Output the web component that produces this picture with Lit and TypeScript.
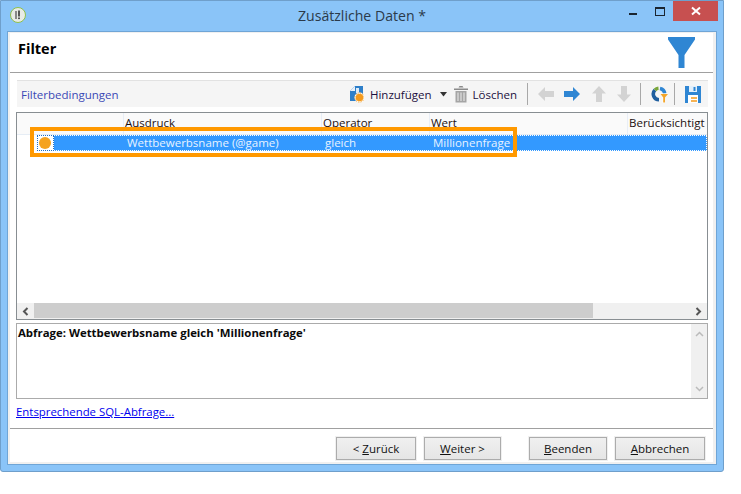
import { LitElement, html, css } from "lit";
import { customElement } from "lit/decorators.js";

const arrow = (d: string, c: string, cls: string) => html`<svg class="ic ${cls}" width="16" height="16" viewBox="0 0 16 16"><path d=${d} fill=${c}></path></svg>`;

@customElement("app-root")
export class AppRoot extends LitElement {
  static styles = css`
    :host { display: block; width: 741px; height: 494px; background: #fff; font-family: "Open Sans", "Noto Sans", sans-serif; font-size: 11.5px; color: #000; overflow: hidden; }
    * { box-sizing: border-box; }
    .win { width: 724px; height: 472px; background: #8ac4f8; border: 1px solid #6f9fcb; padding: 0 6px 6px 6px; display: flex; flex-direction: column; border-radius: 0 0 3px 3px; }
    .title { height: 30px; flex: none; position: relative; }
    .appicon { position: absolute; left: 3px; top: 6px; }
    .ttext { position: absolute; left: 0; right: 0; top: 5px; text-align: center; font-size: 14.1px; color: #2b3a4a; line-height: 20px; }
    .min { position: absolute; right: 80px; top: 12px; width: 8px; height: 2px; background: #1a2530; }
    .max { position: absolute; right: 52px; top: 6px; width: 10px; height: 9px; border: 1px solid #1a2530; border-top-width: 2px; }
    .close { position: absolute; right: -1px; top: 0; width: 45px; height: 20px; background: #c75050; display: flex; align-items: center; justify-content: center; }
    .panel { flex: 1; background: #f0f0f0; border: 1px solid #6fa5d6; padding: 1px 3px 2px 2px; display: flex; }
    .inner { flex: 1; background: #fff; display: flex; flex-direction: column; min-width: 0; }
    .head { height: 40px; flex: none; border-bottom: 1px solid #a0a0a0; position: relative; }
    .head h1 { margin: 0; font-size: 14.5px; font-weight: 700; padding: 6px 0 0 8px; line-height: 20px; }
    .funnel { position: absolute; right: 18px; top: 4px; }
    .body { flex: 1; display: flex; flex-direction: column; padding: 7px 5px 0 6px; }
    .tb { height: 27px; flex: none; background: #f5f5f5; border-top: 1px solid #e2e2e2; display: flex; align-items: center; margin-left: 1px; padding: 0 7px 0 4px; }
    .tb .name { color: #3b49b5; flex: 1; }
    .tb .lbl { color: #1c1040; font-size: 11.5px; }
    .sep { width: 1px; height: 22px; background: #a8a8a8; flex: none; }
    .ic { flex: none; display: block; }
    .m6 { margin-left: 6px; } .m7 { margin-left: 7px; } .m5 { margin-left: 5px; } .m8 { margin-left: 8px; } .m10 { margin-left: 10px; } .m11 { margin-left: 11px; } .m9 { margin-left: 9px; }
    .list { margin-top: 5px; height: 208px; flex: none; border: 1px solid #888e92; position: relative; display: flex; flex-direction: column; }
    .lh { height: 22px; flex: none; background: #fafafa; display: grid; grid-template-columns: 107px 198px 108px 198px 1fr; border-bottom: 1px solid #e6edf5; color: #1c1010; line-height: 19px; }
    .lh div { border-right: 1px solid #e8eef6; padding-left: 1px; white-space: nowrap; }
    .lh div:last-child { border: 0; }
    .sel { height: 16px; flex: none; margin-left: 20px; background: #3399ff; border: 1px dotted #fff; display: grid; grid-template-columns: 88px 198px 108px 1fr; color: #e8f3ff; line-height: 14px; position: relative; }
    .c0 { background: #fff; width: 17px; display: flex; align-items: center; padding-left: 1px; border: 1px dotted #1d70c8; height: 16px; position: absolute; left: -1px; top: -1px; }
    .dot { width: 12px; height: 12px; background: #f5a31f; border-radius: 50%; display: block; }
    .sel span { padding-left: 1px; }
    .fill { flex: 1; background: #fff; }
    .hs { height: 16px; flex: none; background: #f0f0f0; display: flex; align-items: center; }
    .hs .b { width: 17px; height: 16px; display: flex; align-items: center; justify-content: center; flex: none; }
    .hs .t { width: 559px; height: 15px; align-self: flex-start; background: #cdcdcd; flex: none; }
    .hs .r { margin-left: auto; }
    .hl { position: absolute; left: 13px; top: 14px; width: 487px; height: 30px; border: 4px solid #ff9900; pointer-events: none; }
    .area { margin-top: 3px; height: 76px; flex: none; border: 1px solid #ababab; display: flex; }
    .area .txt { flex: 1; font-weight: 700; padding: 0 0 0 1px; line-height: 17px; color: #0a0a0a; font-size: 11.4px; }
    .area .vs { width: 16px; background: #f0f0f0; display: flex; flex-direction: column; justify-content: space-between; align-items: center; padding: 7px 0 6px; }
    .link { height: 29px; flex: none; color: #0000ee; text-decoration: underline; padding-top: 4px; line-height: 17px; font-size: 11.4px; }
    .foot { flex: 1; border-top: 1px solid #a0a0a0; margin: 0 -5px 0 -6px; display: flex; justify-content: flex-end; align-items: flex-start; padding: 8px 8px 0 0; }
    .btn { height: 23px; border: 1px solid #acacac; outline: 1px solid #f0f0f0; background: linear-gradient(#f0f0f0, #e5e5e5); display: flex; align-items: center; justify-content: center; color: #111; margin-left: 8px; font-size: 11.5px; }
    .btn u { text-underline-offset: 1px; }
    .b2 { margin-right: 20px; }
    .w1 { width: 80px; } .w2 { width: 77px; } .w4 { width: 78px; } .w3 { width: 90px; }
  `;

  render() {
    return html`<div class="win">
      <div class="title">
        <svg class="appicon" width="16" height="16" viewBox="0 0 16 16"><circle cx="8" cy="8" r="7.500" fill="#e8ebe6" stroke="#8fc04a" stroke-width="1"></circle><path d="M6 4v8" stroke="#888" stroke-width="2"></path><path d="M9 3.500v6" stroke="#333" stroke-width="1.600"></path><rect x="8.200" y="10.500" width="1.600" height="1.600" fill="#333"></rect></svg>
        <div class="ttext">Zusätzliche Daten *</div>
        <div class="min"></div><div class="max"></div>
        <div class="close"><svg width="10" height="10" viewBox="0 0 10 10"><path d="M1 1.500l8 7M9 1.500l-8 7" stroke="#fff" stroke-width="2"></path></svg></div>
      </div>
      <div class="panel"><div class="inner">
        <div class="head">
          <h1>Filter</h1>
          <svg class="funnel" width="27" height="31" viewBox="0 0 27 31"><path d="M0 0H27V2.500L16.500 18V31H10.500V18L0 2.500z" fill="#2f86d3"></path></svg>
        </div>
        <div class="body">
          <div class="tb">
            <span class="name">Filterbedingungen</span>
            <svg class="ic" width="14" height="18" viewBox="0 0 14 18"><path d="M0 6l5-5h8v15H0z" fill="#2e7fc9"></path><path d="M5 1v5H0z" fill="#e6f0fa"></path><path d="M6 3h3v5H6z" fill="#dcebf8"></path><circle cx="9.500" cy="12.500" r="5" fill="#fff"></circle><circle cx="9.500" cy="12.500" r="3.800" fill="#f39a1d"></circle><circle cx="9.500" cy="12.500" r="4.600" fill="none" stroke="#f39a1d" stroke-width="1" stroke-dasharray="1.200 1.200"></circle></svg>
            <span class="lbl m6">Hinzufügen</span>
            <svg class="ic m8" width="7" height="5" viewBox="0 0 7 5"><path d="M0 0h7L3.500 4.500z" fill="#333"></path></svg>
            <svg class="ic m7" width="14" height="18" viewBox="0 0 14 18"><path d="M0 3.500h14V5H0zM4.500 2.500L5.500 1h3l1 1.500z" fill="#8a8a8a"></path><path d="M1.500 6h11v11.500h-11z" fill="#a5a5a5"></path><path d="M4 7.500v8.500M7 7.500v8.500M10 7.500v8.500" stroke="#eee" stroke-width="1"></path></svg>
            <span class="lbl m5">Löschen</span>
            <div class="sep m10"></div>
            ${arrow("M0 8l7-7v4h9v6H7v4z", "#d3d3d3", "m10")}
            ${arrow("M16 8l-7-7v4H0v6h9v4z", "#2f86d3", "m10")}
            ${arrow("M8 0l7 7.500h-4V16H5V7.500H1z", "#d3d3d3", "m11")}
            ${arrow("M8 16l7-7.500h-4V0H5v8.500H1z", "#d3d3d3", "m9")}
            <div class="sep m8"></div>
            <svg class="ic m10" width="17" height="18" viewBox="0 0 17 18"><g fill="none" stroke-width="3.600"><path d="M8 14.700A5.700 5.700 0 0 1 3.970 5" stroke="#1f5f9f"></path><path d="M3.970 5A5.700 5.700 0 0 1 7.500 3.320" stroke="#7aa63a"></path><path d="M9 3.400A5.700 5.700 0 0 1 13.700 8.500" stroke="#2f86d3"></path></g><path d="M8.500 8.500H17l-3 4V18h-2.500v-5.500z" fill="#fff"></path><path d="M9.500 9H17l-3 3.500V17.500h-1.800v-5z" fill="#f3a52a"></path></svg>
            <div class="sep m6"></div>
            <svg class="ic m10" width="16" height="17" viewBox="0 0 16 17"><path d="M0 0h16v17H0z" fill="#2f86d3"></path><path d="M4 0h8v6H4z" fill="#e3f0fb"></path><path d="M8.500 1h2v4h-2z" fill="#2f86d3"></path><path d="M3 9h10v8H3z" fill="#fff"></path><path d="M6 12h6M6 15h6" stroke="#f39a1d" stroke-width="1.400"></path></svg>
          </div>
          <div class="list">
            <div class="lh"><div></div><div>Ausdruck</div><div>Operator</div><div>Wert</div><div>Berücksichtigt</div></div>
            <div class="sel">
              <div class="c0"><i class="dot"></i></div>
              <span></span><span>Wettbewerbsname (@game)</span><span>gleich</span><span>Millionenfrage</span>
            </div>
            <div class="fill"></div>
            <div class="hs">
              <div class="b"><svg width="7" height="9" viewBox="0 0 7 9"><path d="M5.500 1L2 4.500 5.500 8" fill="none" stroke="#555" stroke-width="2"></path></svg></div>
              <div class="t"></div>
              <div class="b r"><svg width="7" height="9" viewBox="0 0 7 9"><path d="M1.500 1L5 4.500 1.500 8" fill="none" stroke="#555" stroke-width="2"></path></svg></div>
            </div>
            <div class="hl"></div>
          </div>
          <div class="area">
            <div class="txt">Abfrage: Wettbewerbsname gleich 'Millionenfrage'</div>
            <div class="vs">
              <svg width="9" height="6" viewBox="0 0 9 6"><path d="M1 5l3.500-3.500L8 5" fill="none" stroke="#bbb" stroke-width="1.500"></path></svg>
              <svg width="9" height="6" viewBox="0 0 9 6"><path d="M1 1l3.500 3.500L8 1" fill="none" stroke="#bbb" stroke-width="1.500"></path></svg>
            </div>
          </div>
          <div class="link">Entsprechende SQL-Abfrage...</div>
          <div class="foot">
            <div class="btn w1">&lt;&nbsp;<u>Z</u>urück</div>
            <div class="btn w2 b2"><u>W</u>eiter &gt;</div>
            <div class="btn w4"><u>B</u>eenden</div>
            <div class="btn w3"><u>A</u>bbrechen</div>
          </div>
        </div>
      </div></div>
    </div>`;
  }
}
